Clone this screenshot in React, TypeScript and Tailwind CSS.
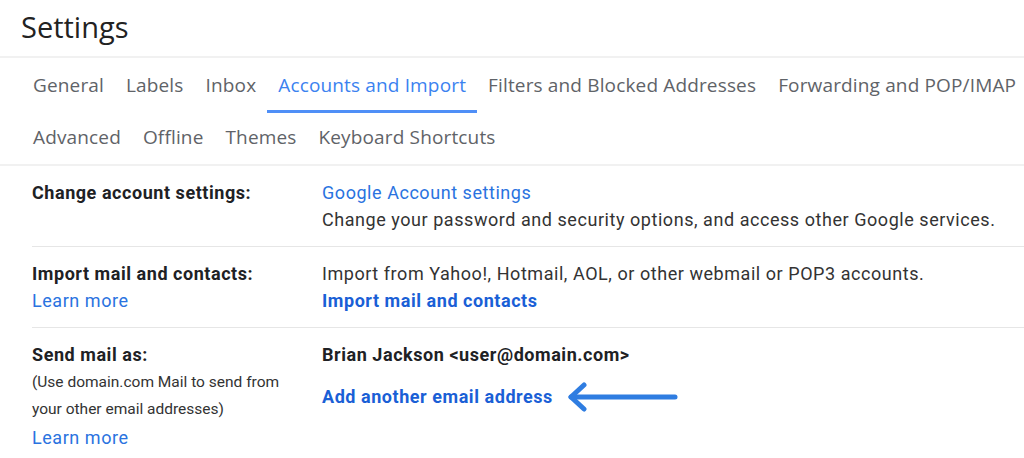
import React from 'react';

const row1 = ['General', 'Labels', 'Inbox', 'Accounts and Import', 'Filters and Blocked Addresses', 'Forwarding and POP/IMAP'];
const row2 = ['Advanced', 'Offline', 'Themes', 'Keyboard Shortcuts'];

function Tab({ label, active }: { label: string; active?: boolean }) {
  return (
    <div
      className={
        'flex h-full items-center px-[11px] border-b-[3px] ' +
        (active ? 'border-[#4f8ff7] text-[#3b82f0]' : 'border-transparent text-[#5f6368]')
      }
    >
      {label}
    </div>
  );
}

function SettingRow({ left, right, last }: { left: React.ReactNode; right: React.ReactNode; last?: boolean }) {
  return (
    <div className={'flex py-[13px] ' + (last ? 'leading-[27.6px]' : 'leading-[27px] border-b border-[#e6e6e6]')}>
      <div className="w-[290px] shrink-0">{left}</div>
      <div className="flex-1">{right}</div>
    </div>
  );
}

export default function App() {
  return (
    <div className="w-[1024px] h-[458px] overflow-hidden bg-white text-[#202124]">
      <div className="h-[58px] border-b-2 border-[#f1f1f1] pl-[21px] pt-[7px] text-[29px] leading-[40px] font-['Open_Sans',sans-serif] text-[#222]">
        Settings
      </div>

      <div className="border-b-2 border-[#f1f1f1] pl-[22px] pt-[2px] font-['Open_Sans',sans-serif] text-[19px] tracking-[0.15px]">
        <div className="flex h-[53px] whitespace-nowrap">
          {row1.map((t) => (
            <Tab key={t} label={t} active={t === 'Accounts and Import'} />
          ))}
        </div>
        <div className="flex h-[51px] whitespace-nowrap">
          {row2.map((t) => (
            <Tab key={t} label={t} />
          ))}
        </div>
      </div>

      <div className="pl-[32px] font-['Roboto',sans-serif] text-[18px] tracking-[0.55px]">
        <SettingRow
          left={<div className="font-bold">Change account settings:</div>}
          right={
            <>
              <div className="text-[#2a73e0]">Google Account settings</div>
              <div className="text-[#333]">Change your password and security options, and access other Google services.</div>
            </>
          }
        />
        <SettingRow
          left={
            <>
              <div className="font-bold">Import mail and contacts:</div>
              <div className="text-[#2a73e0]">Learn more</div>
            </>
          }
          right={
            <>
              <div className="text-[#333]">Import from Yahoo!, Hotmail, AOL, or other webmail or POP3 accounts.</div>
              <div className="font-bold text-[#1a5fd6]">Import mail and contacts</div>
            </>
          }
        />
        <SettingRow
          last
          left={
            <>
              <div className="font-bold">Send mail as:</div>
              <div className="text-[15.5px] tracking-normal text-[#333]">(Use domain.com Mail to send from</div>
              <div className="text-[15.5px] tracking-normal text-[#333]">your other email addresses)</div>
              <div className="text-[#2a73e0]">Learn more</div>
            </>
          }
          right={
            <>
              <div className="font-bold">Brian Jackson &lt;user@domain.com&gt;</div>
              <div className="mt-[13px] flex items-center">
                <span className="font-bold text-[#1a5fd6]">Add another email address</span>
                <svg width="114" height="30" viewBox="0 0 114 30" className="ml-[14px]">
                  <g stroke="#2f7de1" strokeWidth="5" strokeLinecap="round" strokeLinejoin="round" fill="none">
                    <line x1="4" y1="15" x2="108" y2="15" />
                    <polyline points="17,3 4,15 17,27" />
                  </g>
                </svg>
              </div>
            </>
          }
        />
      </div>
    </div>
  );
}
